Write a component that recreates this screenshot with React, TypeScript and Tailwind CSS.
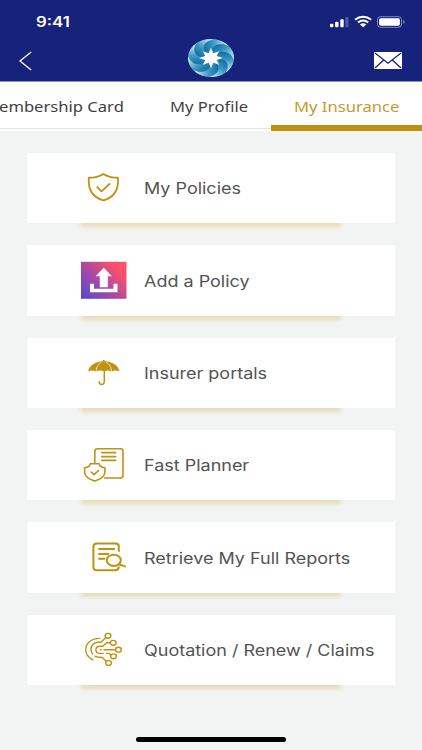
import React from 'react';
import { clsx } from 'clsx';

const GOLD = '#bf9210';

const StatusIcons = () => (
  <svg width="78" height="14" viewBox="0 0 78 14" fill="#fff" className="mt-0.5">
    <rect x="1" y="8.7" width="3.4" height="3.6" rx="1" />
    <rect x="6.1" y="6.7" width="3.4" height="5.6" rx="1" />
    <rect x="11.3" y="4.3" width="3.4" height="8" rx="1" />
    <rect x="16.3" y="2" width="3.2" height="10.3" rx="1" opacity="0.25" />
    <g fill="none" stroke="#fff" strokeWidth="1.9">
      <path d="M26 4.8C30.8 0.8 37.4 0.8 42.2 4.8" />
      <path d="M28.9 7.6C32.2 4.9 36 4.9 39.3 7.6" />
    </g>
    <path d="M34.1 12.2L30.9 9.5C32.9 7.9 35.3 7.9 37.3 9.5Z" />
    <rect x="48.5" y="1.7" width="24" height="10.6" rx="3" fill="none" stroke="#fff" strokeOpacity="0.45" />
    <rect x="50.1" y="3.3" width="20.8" height="7.4" rx="1.6" />
    <path d="M74.2 5.1C76 5.8 76 8.2 74.2 8.9Z" opacity="0.5" />
  </svg>
);

const Logo = () => (
  <svg width="46" height="38" viewBox="-50 -50 100 100" preserveAspectRatio="none">
    <defs>
      <linearGradient id="petal" gradientUnits="userSpaceOnUse" x1="-14" y1="-34" x2="33" y2="-38">
        <stop offset="0" stopColor="#1873ab" />
        <stop offset="0.4" stopColor="#3c97c2" />
        <stop offset="1" stopColor="#c6e6ef" />
      </linearGradient>
    </defs>
    <circle r="49.5" fill="#5aa9cb" />
    {[0, 45, 90, 135, 180, 225, 270, 315].map((angle) => (
      <path
        key={angle}
        d="M0 0C-22 -14 -24 -42 6 -49.6A50 50 0 0 1 39.3 -30.8C12.7 -46.7 -5.7 -25.5 0 0Z"
        fill="url(#petal)"
        transform={`rotate(${angle})`}
      />
    ))}
    <path
      d="M0 -27L5 -12.5L17.5 -17.5L12.5 -5L26 0L12.5 5L17.5 17.5L5 12.5L0 27L-5 12.5L-17.5 17.5L-12.5 5L-26 0L-12.5 -5L-17.5 -17.5L-5 -12.5Z"
      fill="#fff"
    />
  </svg>
);

const ShieldIcon = () => (
  <svg width="46" height="40" viewBox="0 0 46 40" fill="none" stroke={GOLD} strokeWidth="1.8" strokeLinecap="round" strokeLinejoin="round">
    <path d="M22.4 5.9C17.8 8.9 13 9.7 7.8 9.7C7 20.3 11 29.1 22.4 32.3C33.8 29.1 37.8 20.3 37 9.7C31.8 9.7 27 8.9 22.4 5.9Z" />
    <path d="M16.2 19.2L20.5 23.3L28.5 16" />
  </svg>
);

const UploadIcon = () => (
  <svg width="46" height="40" viewBox="0 0 46 40">
    <defs>
      <linearGradient id="upload" x1="0" y1="0.9" x2="1" y2="0.1">
        <stop offset="0" stopColor="#5848cf" />
        <stop offset="0.5" stopColor="#b64b9b" />
        <stop offset="0.85" stopColor="#ff5068" />
      </linearGradient>
    </defs>
    <rect y="1.8" width="45.5" height="37" fill="url(#upload)" />
    <path d="M22.8 7.8L31 16.3H26.8V27.3H18.8V16.3H14.6Z" fill="#fff" />
    <path d="M9 23.8H13V28.8H32.5V23.8H36.5V32.3H9Z" fill="#fff" />
  </svg>
);

const UmbrellaIcon = () => (
  <svg width="46" height="40" viewBox="0 0 46 40">
    <g transform="translate(0 1)">
      <path d="M7 17.4C8.5 11.3 14.5 7.8 22 7.3V6.2Q22.8 5.2 23.6 6.2V7.3C31.5 7.8 37.2 11.3 38.6 17.4C36 16.3 33 16.3 30.7 17.4C28.2 16.3 25.4 16.3 22.8 17.1C20.2 16.3 17.4 16.3 14.9 17.4C12.5 16.3 9.5 16.3 7 17.4Z" fill={GOLD} />
      <path d="M15 17C15.5 12.5 18 9.5 20.5 8.2M30.6 17C30.1 12.5 27.6 9.5 25.1 8.2" fill="none" stroke="#fff" strokeWidth="0.7" />
      <path d="M23.3 16V27.4C23.3 31.6 18.2 31.2 18.2 27.7" fill="none" stroke={GOLD} strokeWidth="1.5" strokeLinecap="round" />
    </g>
  </svg>
);

const PlannerIcon = () => (
  <svg width="46" height="40" viewBox="0 0 46 40" fill="none" stroke={GOLD} strokeWidth="1.6" strokeLinejoin="round" strokeLinecap="round">
    <path d="M13.8 17.5V6.4Q13.8 3.8 16.5 3.8H39.4Q42 3.8 42 6.4V30.4Q42 33 39.4 33H23.5" />
    <path d="M20.7 7.6H34.7M20.7 11.6H34.7M20.7 15.4H34.7" />
    <path d="M9.2 18.8H18.2Q18.2 22 23.9 22.8V27.5Q23.5 33 13.7 36.1Q4 33 3.6 27.5V22.8Q9.2 22 9.2 18.8Z" />
    <path d="M10 27L13 29.6L17.5 25.7" />
  </svg>
);

const ReportIcon = () => (
  <svg width="46" height="40" viewBox="0 0 46 40" fill="none" stroke={GOLD} strokeWidth="2" strokeLinecap="round" strokeLinejoin="round">
    <path d="M37.8 14V9.5Q37.8 6.6 34.4 6.6H16Q12.4 6.6 12.4 9.5V30.2Q12.4 33.2 16 33.2H34.4Q37.4 33.2 37.8 30.2" />
    <path d="M18 12H33.2M18 17H27.2M18 21.7H23.2" />
    <ellipse cx="32.8" cy="23.3" rx="7" ry="5.6" />
    <path d="M37.8 27.2L44 29.4" />
  </svg>
);

const CircuitIcon = () => (
  <svg width="46" height="40" viewBox="0 0 46 40" fill="none" stroke={GOLD} strokeWidth="1.4" strokeLinecap="round">
    <path d="M18.7 8.4C10 8.4 4.7 13.5 4.7 19.7C4.7 24 7 27.2 11.7 29.8" />
    <path d="M24.8 7.4L20 12.2H17C12.4 12.2 10 15.8 10 19.6C10 21.5 10.5 22.7 11.7 23.8" />
    <path d="M29.4 12.8H25.7L21.7 16.3H19C16 16.3 14.9 18 14.9 19.7C14.9 22 16.6 23.4 19 23.4H22.2" />
    <path d="M19.6 19.7H20.2M23 19.7H34.4" />
    <path d="M25.5 23.4H28L30 25M14 26.2C16 27.5 18 27.5 21.3 27.5L25.2 31.3" />
    <ellipse cx="27" cy="5.8" rx="2.9" ry="2.4" />
    <ellipse cx="32.3" cy="12.8" rx="2.9" ry="2.4" />
    <ellipse cx="37.4" cy="19.7" rx="2.9" ry="2.4" />
    <ellipse cx="32.5" cy="26.3" rx="2.9" ry="2.4" />
    <ellipse cx="27.5" cy="33" rx="2.9" ry="2.4" />
  </svg>
);

const items = [
  { label: 'My Policies', Icon: ShieldIcon },
  { label: 'Add a Policy', Icon: UploadIcon },
  { label: 'Insurer portals', Icon: UmbrellaIcon },
  { label: 'Fast Planner', Icon: PlannerIcon },
  { label: 'Retrieve My Full Reports', Icon: ReportIcon },
  { label: 'Quotation / Renew / Claims', Icon: CircuitIcon },
];

const Header = () => (
  <header className="h-[82px] bg-[#17227b] border-b border-[#8d92c2] text-white">
    <div className="flex items-center justify-between h-[42px] pl-9 pr-[15px]">
      <span className="inline-block mt-0.5 origin-left scale-x-[1.2] font-['Inter',sans-serif] font-semibold text-[14px] leading-5">
        9:41
      </span>
      <StatusIcons />
    </div>
    <div className="grid grid-cols-3 items-center h-[38px] px-[19px] -mt-[3px]">
      <svg width="13" height="20" viewBox="0 0 13 20" fill="none" stroke="#fff" strokeWidth="1.3" className="mt-[5px]">
        <path d="M12.2 1L1 10L12.2 19" />
      </svg>
      <div className="justify-self-center">
        <Logo />
      </div>
      <svg width="28" height="17" viewBox="0 0 28 17" className="justify-self-end mt-[5px] mr-px">
        <rect width="28" height="17" rx="1" fill="#fff" />
        <path d="M1 1L14 11.2L27 1M1 16L9.7 8M27 16L18.3 8" fill="none" stroke="#17227b" strokeWidth="1.3" />
      </svg>
    </div>
  </header>
);

const Tab = ({ label, active, className }: { label: string; active?: boolean; className?: string }) => (
  <button className={clsx('h-full flex items-center shrink-0 whitespace-nowrap', active ? 'text-[#c49b2e] border-b-[6px] border-[#bb910e]' : 'text-[#3f3f3f] pt-[3px]', className)}>
    <span className="inline-block origin-left scale-x-[1.185]">{label}</span>
  </button>
);

const App = () => {
  return (
    <div className="w-[422px] h-[750px] overflow-hidden flex flex-col bg-[#f2f4f4]">
      <Header />
      <nav className="flex h-[49px] bg-white font-['Noto_Sans',sans-serif] text-[14px] shrink-0">
        <div className="flex h-[47px] w-[271px] border-b border-[#e2e2e2]">
          <Tab label="Membership Card" className="w-[186px] -ml-4" />
          <Tab label="My Profile" className="w-[101px]" />
        </div>
        <Tab label="My Insurance" active className="w-[151px] pl-[23px] pt-1.5" />
      </nav>

      <main className="flex flex-col gap-[22.15px] px-[27px] pt-[22px]">
        {items.map(({ label, Icon }) => (
          <div key={label} className="relative w-[368px] h-[70.2px]">
            <div className="absolute left-[54px] top-full -mt-2 w-[260px] h-2 shadow-[0_4px_4px_0_#e6dcb9]" />
            <div className="relative flex items-center h-full bg-white pl-[54px]">
              <Icon />
              <span className="ml-[17.3px] mt-0.5 inline-block origin-left scale-x-[1.16] whitespace-nowrap font-['Inter',sans-serif] text-[15.5px] text-[#535353]">
                {label}
              </span>
            </div>
          </div>
        ))}
      </main>

      <div className="mt-auto mb-2 mx-auto w-[150px] h-[5px] rounded-full bg-black" />
    </div>
  );
};

export default App;
